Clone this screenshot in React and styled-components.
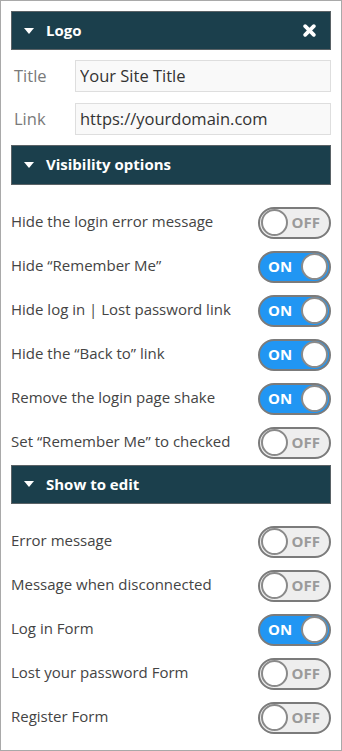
import React, { useState } from "react";
import styled, { createGlobalStyle } from "styled-components";

const GlobalStyle = createGlobalStyle`
  html, body {
    margin: 0;
    padding: 0;
    background: #fff;
  }
  * {
    box-sizing: border-box;
  }
`;

const Panel = styled.div`
  width: 342px;
  height: 751px;
  border: 1px solid #a9a9a9;
  padding: 10px;
  font-family: "Open Sans", "Noto Sans", sans-serif;
  display: flex;
  flex-direction: column;
`;

const SectionHeader = styled.div`
  height: 40px;
  background: #1b3f4c;
  border: 1px solid #5a6266;
  display: flex;
  align-items: center;
  padding: 0 14px 0 12px;
  color: #fff;
  font-weight: 700;
  font-size: 15px;

  .caret {
    width: 0;
    height: 0;
    border-left: 5px solid transparent;
    border-right: 5px solid transparent;
    border-top: 6px solid #fff;
    margin-right: 12px;
  }

  .title {
    flex: 1;
    margin-top: -1px;
  }
`;

const FieldRow = styled.div`
  display: flex;
  align-items: center;
  margin-top: ${p => p.gap || 11}px;

  label {
    width: 64px;
    padding-left: 3px;
    padding-bottom: 2px;
    color: #7a7a7a;
    font-size: 16.5px;
  }

  input {
    flex: 1;
    height: 32px;
    border: 1px solid #dedede;
    background: #f9f9f9;
    padding: 0 4px 2px;
    font-family: "Open Sans", "Noto Sans", sans-serif;
    font-size: 16.5px;
    color: #333;
    outline: none;
  }
`;

const OptionList = styled.div`
  margin-top: 16px;
`;

const OptionRow = styled.div`
  height: 44px;
  display: flex;
  align-items: center;
  justify-content: space-between;
  color: #444;
  font-size: 15px;

  .text {
    padding-bottom: 4px;
  }
`;

const Switch = styled.button`
  width: 73px;
  height: 32px;
  border-radius: 16px;
  border: 2px solid #7b7b7b;
  background: ${p => (p.on ? "#2196f3" : "#eeeeee")};
  display: flex;
  flex-direction: ${p => (p.on ? "row" : "row-reverse")};
  align-items: center;
  justify-content: space-between;
  padding: 0 ${p => (p.on ? "1px" : "9px")} 0 ${p => (p.on ? "8px" : "1px")};
  cursor: pointer;
  font-family: "Open Sans", "Noto Sans", sans-serif;

  span {
    font-weight: 700;
    font-size: 15px;
    color: ${p => (p.on ? "#fff" : "#9a9a9a")};
    padding-bottom: 1px;
  }

  i {
    width: 27px;
    height: 27px;
    border-radius: 50%;
    background: #fff;
    border: 2px solid #8a8a8a;
  }
`;

const Toggle = ({ on, onClick }) => (
  <Switch on={on ? 1 : 0} onClick={onClick}>
    <span>{on ? "ON" : "OFF"}</span>
    <i />
  </Switch>
);

const CloseIcon = () => (
  <svg width="13" height="13" viewBox="0 0 12 12">
    <path d="M2 2 L10 10 M10 2 L2 10" stroke="#fff" strokeWidth="3.4" strokeLinecap="round" />
  </svg>
);

const Header = ({ children, close }) => (
  <SectionHeader>
    <div className="caret" />
    <div className="title">{children}</div>
    {close && <CloseIcon />}
  </SectionHeader>
);

const visibility = [
  ["Hide the login error message", false],
  ["Hide \u201CRemember Me\u201D", true],
  ["Hide log in | Lost password link", true],
  ["Hide the \u201CBack to\u201D link", true],
  ["Remove the login page shake", true],
  ["Set \u201CRemember Me\u201D to checked", false]
];

const editing = [
  ["Error message", false],
  ["Message when disconnected", false],
  ["Log in Form", true],
  ["Lost your password Form", false],
  ["Register Form", false]
];

const Options = ({ items }) => {
  const [state, setState] = useState(items.map(i => i[1]));
  return (
    <OptionList>
      {items.map((item, index) => (
        <OptionRow key={index}>
          <span className="text">{item[0]}</span>
          <Toggle
            on={state[index]}
            onClick={() => setState(state.map((v, i) => (i === index ? !v : v)))}
          />
        </OptionRow>
      ))}
    </OptionList>
  );
};

const Spacer = styled.div`
  height: 10px;
  flex-shrink: 0;
`;

const App = () => (
  <Panel>
    <GlobalStyle />
    <Header close>Logo</Header>
    <FieldRow gap={10}>
      <label>Title</label>
      <input defaultValue="Your Site Title" />
    </FieldRow>
    <FieldRow>
      <label>Link</label>
      <input defaultValue="https://yourdomain.com" />
    </FieldRow>
    <Spacer />
    <Header>Visibility options</Header>
    <Options items={visibility} />
    <Header>Show to edit</Header>
    <Options items={editing} />
  </Panel>
);

export default App;
